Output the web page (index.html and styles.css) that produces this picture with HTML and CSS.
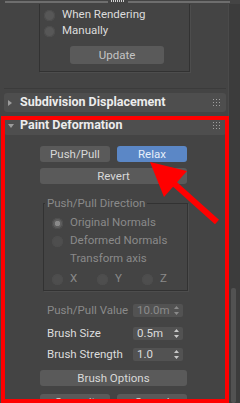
FILE: index.html
```html
<!DOCTYPE html>
<html lang="en">

<head>
	<meta charset="UTF-8">
	<title>Paint Deformation</title>
	<link rel="stylesheet" href="styles.css">
</head>

<body>

	<div class="app">

		<div class="top-rule">
			<span class="rule"></span>
			<span class="rule-grip"></span>
			<span class="rule"></span>
		</div>

		<div class="main">

			<div class="panel">

				<div class="rollout prev">
					<div class="group prev-group">
						<label class="radio-row"><span class="radio"></span>When Rendering</label>
						<label class="radio-row"><span class="radio"></span>Manually</label>
						<div class="btn btn-update">Update</div>
					</div>
				</div>

				<div class="rollout-head closed">
					<span class="tri-right"></span>
					<span class="head-title">Subdivision Displacement</span>
					<svg class="grip" width="7" height="7" viewBox="0 0 7 7">
						<rect x="0" y="0" width="1" height="1" /><rect x="3" y="0" width="1" height="1" /><rect x="6" y="0" width="1" height="1" />
						<rect x="0" y="3" width="1" height="1" /><rect x="3" y="3" width="1" height="1" /><rect x="6" y="3" width="1" height="1" />
						<rect x="0" y="6" width="1" height="1" /><rect x="3" y="6" width="1" height="1" /><rect x="6" y="6" width="1" height="1" />
					</svg>
				</div>

				<div class="rollout paint">
					<div class="rollout-head">
						<span class="tri-down"></span>
						<span class="head-title">Paint Deformation</span>
						<svg class="grip" width="7" height="7" viewBox="0 0 7 7">
							<rect x="0" y="0" width="1" height="1" /><rect x="3" y="0" width="1" height="1" /><rect x="6" y="0" width="1" height="1" />
							<rect x="0" y="3" width="1" height="1" /><rect x="3" y="3" width="1" height="1" /><rect x="6" y="3" width="1" height="1" />
							<rect x="0" y="6" width="1" height="1" /><rect x="3" y="6" width="1" height="1" /><rect x="6" y="6" width="1" height="1" />
						</svg>
					</div>

					<div class="rollout-body">

						<div class="btn-pair">
							<div class="btn">Push/Pull</div>
							<div class="btn btn-on">Relax</div>
						</div>
						<div class="btn btn-wide revert">Revert</div>

						<fieldset class="direction">
							<legend>Push/Pull Direction</legend>
							<div class="radio-row off"><span class="radio checked"></span>Original Normals</div>
							<div class="radio-row off"><span class="radio"></span>Deformed Normals</div>
							<div class="radio-row off plain">Transform axis</div>
							<div class="axis-row">
								<div class="radio-row off"><span class="radio"></span>X</div>
								<div class="radio-row off"><span class="radio"></span>Y</div>
								<div class="radio-row off"><span class="radio"></span>Z</div>
							</div>
						</fieldset>

						<div class="spin-row off first">
							<span class="spin-label">Push/Pull Value</span>
							<span class="spin-field">10.0m
								<svg class="spin-arrows" width="5" height="9" viewBox="0 0 5 9"><path d="M2.5 0L5 3H0z M2.5 9L0 6H5z" /></svg>
							</span>
						</div>
						<div class="spin-row second">
							<span class="spin-label">Brush Size</span>
							<span class="spin-field">0.5m
								<svg class="spin-arrows" width="5" height="9" viewBox="0 0 5 9"><path d="M2.5 0L5 3H0z M2.5 9L0 6H5z" /></svg>
							</span>
						</div>
						<div class="spin-row third">
							<span class="spin-label">Brush Strength</span>
							<span class="spin-field">1.0
								<svg class="spin-arrows" width="5" height="9" viewBox="0 0 5 9"><path d="M2.5 0L5 3H0z M2.5 9L0 6H5z" /></svg>
							</span>
						</div>

						<div class="btn btn-wide options">Brush Options</div>
						<div class="btn-pair last">
							<div class="btn">Commit</div>
							<div class="btn">Cancel</div>
						</div>

					</div>
				</div>

			</div> <!-- end panel -->

			<div class="scrollbar">
				<div class="thumb"></div>
			</div>

		</div> <!-- end main -->

		<!-- red annotation drawn over the screenshot -->
		<div class="mark-box"></div>
		<svg class="mark-arrow" width="240" height="403" viewBox="0 0 240 403">
			<line x1="160" y1="171" x2="217" y2="222" stroke="#ff0000" stroke-width="6" />
			<polygon points="150,162 187,171 164,197" fill="#ff0000" />
		</svg>

	</div> <!-- end app -->

</body>

</html>
```

FILE: styles.css
```css
body {
	background: #444;
	color: #dcdcdc;
	font: 11.5px/1 Roboto, 'Liberation Sans', sans-serif;
	margin: 0;
}

.app {
	height: 403px;
	overflow: hidden;
	position: relative;
	width: 240px;
}

/* thin rule at the very top */
.top-rule {
	align-items: flex-start;
	box-sizing: border-box;
	display: flex;
	gap: 3px;
	height: 4px;
	padding: 1px 10px 0 5px;
}

.rule {
	background: #6e6e6e;
	flex: 1;
	height: 2px;
}

.rule-grip {
	background: repeating-linear-gradient(90deg, #d0d0d0 0 1px, transparent 1px 2px);
	height: 2px;
	margin-top: -1px;
	width: 14px;
}

.main {
	display: flex;
	height: 399px;
}

.panel {
	flex: 1;
	padding: 0 2px 0 4px;
}

.scrollbar {
	background: #3c3c3c;
	border-left: 1px solid #4a4a4a;
	display: flex;
	flex-direction: column;
	justify-content: flex-end;
	padding-left: 2px;
	width: 9px;
}

.thumb {
	background: #525252;
	border-radius: 2px;
	height: 115px;
	width: 5px;
}

/* rollouts */
.rollout.prev {
	border-bottom: 1px solid #3b3b3b;
	height: 84px;
	margin-bottom: 4px;
}

.group {
	border: 1px solid #323232;
	box-shadow: 1px 1px 0 #4d4d4d;
}

.prev-group {
	border-top: 0;
	margin-left: 35px;
	padding: 3px 0 7px 4px;
	width: 145px;
}

.rollout-head {
	align-items: center;
	background: #4e4e4e;
	border-radius: 3px;
	color: #ececec;
	display: flex;
	font-size: 12.5px;
	font-weight: 700;
	height: 19px;
}

.rollout-head.closed {
	margin-bottom: 4px;
}

.tri-right {
	border-bottom: 3px solid transparent;
	border-left: 4px solid #9c9c9c;
	border-top: 3px solid transparent;
	margin: 0 8px 0 4px;
}

.tri-down {
	border-left: 3px solid transparent;
	border-right: 3px solid transparent;
	border-top: 4px solid #9c9c9c;
	margin: 1px 6px 0 4px;
}

.head-title {
	flex: 1;
}

.grip {
	fill: #a0a0a0;
	margin-right: 6px;
}

.rollout-body {
	padding: 11px 0 0 36px;
}

/* buttons */
.btn {
	background: #5a5a5a;
	border-radius: 3px;
	box-sizing: border-box;
	color: #d8d8d8;
	height: 16px;
	line-height: 16px;
	text-align: center;
	width: 70px;
}

.btn-update {
	color: #c4c4c4;
	height: 18px;
	line-height: 18px;
	margin: 7px 0 0 26px;
	width: 94px;
}

.btn-on {
	background: #5b87c6;
	color: #e6eefa;
}

.btn-pair {
	display: flex;
	gap: 7px;
}

.btn-wide {
	width: 147px;
}

.revert {
	margin-top: 6px;
}

.options {
	margin-top: 9px;
}

.btn-pair.last {
	margin-top: 8px;
}

/* radios */
.radio-row {
	align-items: center;
	display: flex;
	height: 16px;
}

.radio {
	background: #575757;
	border-radius: 50%;
	box-shadow: inset 0 0 0 1px #4d4d4d;
	height: 11px;
	margin-right: 7px;
	width: 11px;
}

.off {
	color: #8a8a8a;
}

.off .radio {
	background: #4e4e4e;
}

.off .radio.checked {
	background: radial-gradient(circle, #8a8a8a 0 2.5px, #5e5e5e 3px);
}

/* Push/Pull Direction group */
.direction {
	border: 1px solid #323232;
	box-shadow: 1px 1px 0 #4d4d4d;
	box-sizing: border-box;
	margin: 13px 0 0 3px;
	padding: 4px 0 2px 8px;
	width: 133px;
}

.direction legend {
	color: #8a8a8a;
	line-height: 13px;
	margin-left: -7px;
	padding: 0 2px;
}

.direction .radio-row {
	height: 18px;
}

.direction .plain {
	padding-left: 18px;
}

.axis-row {
	display: flex;
	margin-top: 2px;
}

.axis-row .radio-row {
	width: 45px;
}

/* spinners */
.spin-row {
	align-items: center;
	display: flex;
	height: 13px;
}

.spin-row.first {
	margin-top: 13px;
}

.spin-row.second {
	margin-top: 10px;
}

.spin-row.third {
	margin-top: 8px;
}

.spin-label {
	padding-left: 7px;
	width: 86px;
}

.spin-field {
	align-items: center;
	background: #525252;
	border-radius: 2px;
	display: flex;
	height: 13px;
	justify-content: space-between;
	padding: 0 4px;
	width: 42px;
}

.spin-arrows {
	fill: #c8c8c8;
}

.off .spin-arrows {
	fill: #8a8a8a;
}

/* annotation */
.mark-box {
	border: 4px solid #ff0000;
	height: 279px;
	left: 1px;
	position: absolute;
	top: 116px;
	width: 220px;
}

.mark-arrow {
	left: 0;
	position: absolute;
	top: 0;
}
```
